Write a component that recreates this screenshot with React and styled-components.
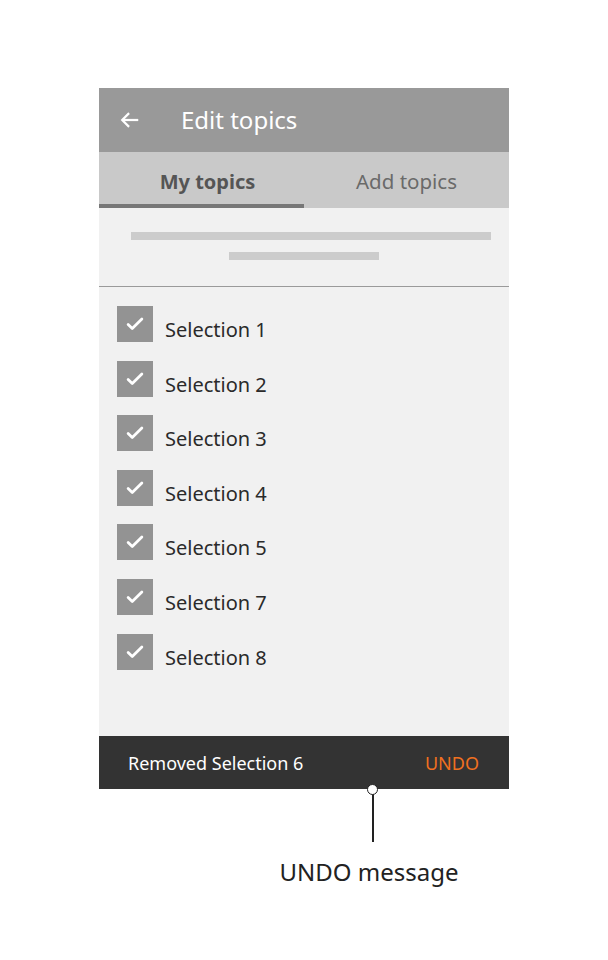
import React from "react";
import styled, { createGlobalStyle } from "styled-components";

const GlobalStyle = createGlobalStyle`
  body {
    margin: 0;
    background: #ffffff;
    font-family: "Noto Sans", "Open Sans", sans-serif;
  }
`;

const Page = styled.div`
  width: 608px;
  height: 960px;
  padding-top: 88px;
  padding-left: 99px;
  box-sizing: border-box;
`;

const Phone = styled.div`
  width: 410px;
  height: 701px;
  display: flex;
  flex-direction: column;
  background: #f1f1f1;
`;

const AppBar = styled.div`
  height: 64px;
  background: #999999;
  display: flex;
  align-items: center;
  padding-left: 20px;
  gap: 40px;
  color: #ffffff;
`;

const Title = styled.div`
  font-size: 24px;
  line-height: 1;
`;

const Tabs = styled.div`
  height: 56px;
  background: #c9c9c9;
  display: flex;
`;

const Tab = styled.div`
  width: 50%;
  display: flex;
  align-items: center;
  justify-content: center;
  font-size: ${(p) => (p.active ? "20px" : "20.5px")};
  font-weight: ${(p) => (p.active ? 700 : 400)};
  color: ${(p) => (p.active ? "#555555" : "#6a6a6a")};
  border-bottom: 4px solid ${(p) => (p.active ? "#777777" : "transparent")};
  padding-top: 6px;
  box-sizing: border-box;
  padding-left: ${(p) => (p.active ? "12px" : "0")};
`;

const Intro = styled.div`
  height: 79px;
  border-bottom: 1px solid #9a9a9a;
  display: flex;
  flex-direction: column;
  align-items: center;
  padding-top: 24px;
  gap: 12px;
  box-sizing: border-box;
`;

const Placeholder = styled.div`
  height: 8px;
  width: ${(p) => p.w}px;
  margin-left: ${(p) => p.shift || 0}px;
  background: #cccccc;
`;

const List = styled.div`
  flex: 1;
  padding: 19px 0 0 18px;
  display: flex;
  flex-direction: column;
  gap: 18.6px;
`;

const Row = styled.div`
  display: flex;
  align-items: center;
  gap: 12px;
  height: 36px;
`;

const Box = styled.div`
  width: 36px;
  height: 36px;
  background: #939393;
  display: flex;
  align-items: center;
  justify-content: center;
`;

const Label = styled.div`
  font-size: 20px;
  color: #2a2a2a;
  padding-top: 11px;
`;

const Snackbar = styled.div`
  position: relative;
  height: 53px;
  background: #333333;
  display: flex;
  align-items: center;
  justify-content: space-between;
  padding: 0 30px 0 29px;
  font-size: 18px;
`;

const SnackText = styled.span`
  color: #ffffff;
`;

const Undo = styled.span`
  color: #f07020;
`;

const Dot = styled.div`
  position: absolute;
  left: 268px;
  bottom: -6px;
  width: 9px;
  height: 9px;
  border-radius: 50%;
  background: #ffffff;
  border: 1.5px solid #222222;
`;

const Callout = styled.div`
  width: 410px;
  display: flex;
  flex-direction: column;
  align-items: center;
  padding-left: 130px;
  box-sizing: border-box;
`;

const Stem = styled.div`
  width: 1.5px;
  height: 48px;
  margin-top: 5px;
  margin-left: 8px;
  background: #222222;
`;

const CalloutLabel = styled.div`
  margin-top: 13px;
  font-size: 24px;
  color: #222222;
`;

const BackArrow = () => (
  <svg width="22" height="22" viewBox="0 0 24 24" fill="none" stroke="#fff" strokeWidth="2.4">
    <path d="M21 12H4" />
    <path d="M11 4.5L3.5 12 11 19.5" />
  </svg>
);

const Check = () => (
  <svg width="22" height="22" viewBox="0 0 24 24" fill="none" stroke="#fff" strokeWidth="3" strokeLinecap="round" strokeLinejoin="round">
    <path d="M4.5 12.5l4.5 4.5L19.5 6.5" />
  </svg>
);

const items = ["Selection 1", "Selection 2", "Selection 3", "Selection 4", "Selection 5", "Selection 7", "Selection 8"];

export default function App() {
  return (
    <Page>
      <GlobalStyle />
      <Phone>
        <AppBar>
          <BackArrow />
          <Title>Edit topics</Title>
        </AppBar>
        <Tabs>
          <Tab active>My topics</Tab>
          <Tab>Add topics</Tab>
        </Tabs>
        <Intro>
          <Placeholder w={360} shift={14} />
          <Placeholder w={150} />
        </Intro>
        <List>
          {items.map((item) => (
            <Row key={item}>
              <Box>
                <Check />
              </Box>
              <Label>{item}</Label>
            </Row>
          ))}
        </List>
        <Snackbar>
          <SnackText>Removed Selection 6</SnackText>
          <Undo>UNDO</Undo>
          <Dot />
        </Snackbar>
      </Phone>
      <Callout>
        <Stem />
        <CalloutLabel>UNDO message</CalloutLabel>
      </Callout>
    </Page>
  );
}
